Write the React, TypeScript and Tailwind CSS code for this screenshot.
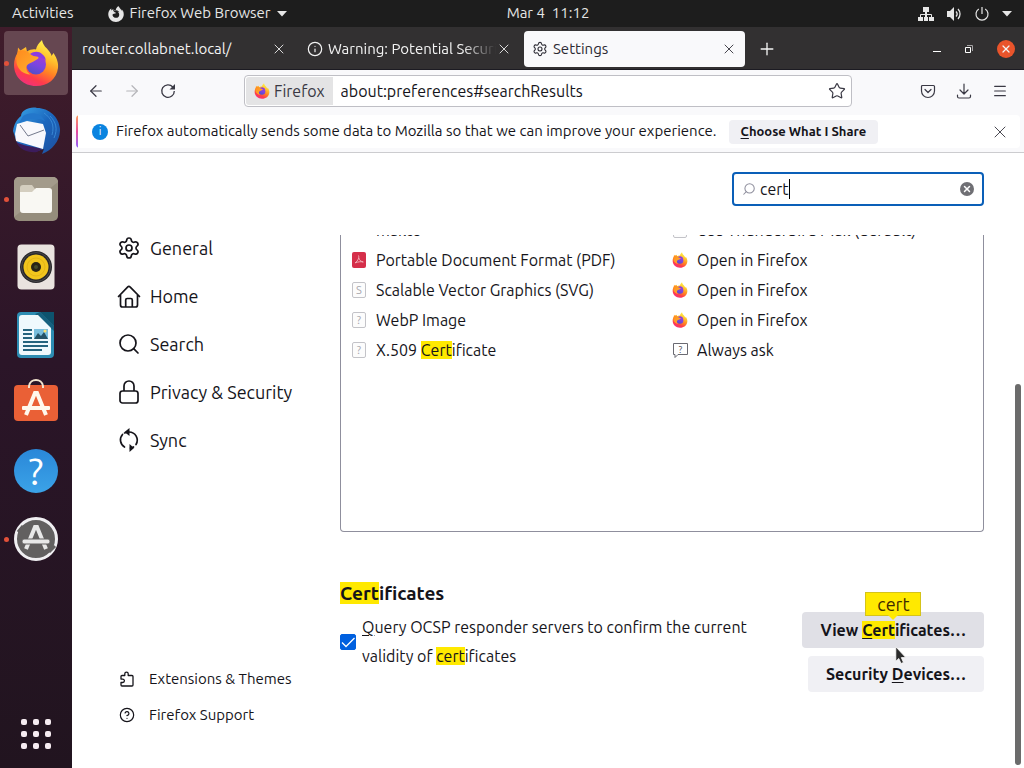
import { useId, useState } from "react";
import type { ReactNode } from "react";
import {
  ArrowLeft,
  ArrowRight,
  CircleQuestionMark,
  Info,
  Menu,
  Plus,
  Search,
  Settings,
  Star,
  X,
} from "lucide-react";
import { SiFirefoxbrowser } from "react-icons/si";

const Mark = ({ children }: { children: ReactNode }) => (
  <mark className="bg-[#ffe900] text-inherit">{children}</mark>
);

function FirefoxLogo({ className }: { className?: string }) {
  const id = useId();
  return (
    <svg viewBox="0 0 48 48" className={className} aria-hidden="true">
      <defs>
        <linearGradient id={`${id}body`} x1="0.75" y1="0.05" x2="0.3" y2="1">
          <stop offset="0" stopColor="#fff44f" />
          <stop offset="0.3" stopColor="#ffc02d" />
          <stop offset="0.55" stopColor="#ff8423" />
          <stop offset="0.8" stopColor="#ff3b4c" />
          <stop offset="1" stopColor="#f0307f" />
        </linearGradient>
        <linearGradient id={`${id}globe`} x1="0.7" y1="0" x2="0.3" y2="1">
          <stop offset="0" stopColor="#a43bd6" />
          <stop offset="0.5" stopColor="#7b45e0" />
          <stop offset="1" stopColor="#4d50c8" />
        </linearGradient>
        <linearGradient id={`${id}head`} x1="0" y1="0" x2="1" y2="1">
          <stop offset="0" stopColor="#ff8a1e" />
          <stop offset="1" stopColor="#ffb52e" />
        </linearGradient>
      </defs>
      <path
        fill={`url(#${id}body)`}
        d="M30 1c1 6 5 8 7 11 1.500 2 2.500 3.500 2.500 5l2-3c4 6 5 11 4.500 15C44.500 40 36 47 24 47 11.500 47 2 38 2 26c0-5 1.500-9 3.500-12L6 8.500l2.500 3L14 8l1 4.500c3-2 6-2.500 9-2C24.500 7 27 4 30 1Z"
      />
      <circle cx="24" cy="25.500" r="10" fill={`url(#${id}globe)`} />
      <path
        fill="#8a3be0"
        d="M18 15c4-3 9-3 12 0 3 2 4 5 3.500 7-2-3-5-4-8-4l-6 2Z"
      />
      <path
        fill={`url(#${id}head)`}
        d="M6 12c3-1 7-1 9.500.5 2 1.500 3 3.500 6 4.500 2 .6 4.500.3 5 1.500.4 1.500-3 2.500-5 4-2.500 1.500-6 2-7 5-.8 3 1 6 4 8-7 0-13-5-14-12-.4-4 .2-8 1.500-11.500Z"
      />
    </svg>
  );
}

const ThunderbirdLogo = () => (
  <svg viewBox="0 0 48 48" className="size-12" aria-hidden="true">
    <defs>
      <linearGradient id="bird" x1="0" y1="0" x2="1" y2="1">
        <stop offset="0" stopColor="#3aa7ea" />
        <stop offset="0.5" stopColor="#1b66bd" />
        <stop offset="1" stopColor="#1f4f9e" />
      </linearGradient>
    </defs>
    <path
      fill="url(#bird)"
      d="M13 3c3-2 8-3 12-2 12 0 22 9 23 21 .5 11-7 21-18 25l2-5-7 2c-9 1-18-3-21-11L1 24C2 17 5 12 9 9c0-3 2-5 4-6Z"
    />
    <path fill="#3c1c5c" d="M4 35c7 4 16 4 26 7l-5 3C16 46 8 43 4 35Z" />
    <path fill="#f8f8fc" d="M5 17 15 14l16 3 3 9-3 16L4 34l-1-7Z" />
    <path
      fill="none"
      stroke="#646b80"
      strokeWidth="0.900"
      d="m8 18 8 11 16-6"
    />
    <path fill="#2377cb" d="M11 9c8-5 18-3 22 5-6-3-13-3-20 0l-6 2Z" />
    <path
      fill="none"
      stroke="#3b8cd8"
      strokeWidth="0.900"
      d="M32 6c7 5 11 12 8 22M38 9c6 6 8 13 4 22"
    />
  </svg>
);

const FilesLogo = () => (
  <svg viewBox="0 0 44 44" className="size-11" aria-hidden="true">
    <rect width="44" height="44" rx="5" fill="#958d7c" />
    <path fill="#a39b8b" d="M5 0h34a5 5 0 0 1 5 5L0 40V5a5 5 0 0 1 5-5Z" />
    <path
      fill="#d4cebf"
      d="M9 8h9l3 4h14a3 3 0 0 1 3 3v4H6v-8a3 3 0 0 1 3-3Z"
    />
    <path
      fill="#f9f8f3"
      d="M6 15h12l4-4h13a3 3 0 0 1 3 3v19a3 3 0 0 1-3 3H9a3 3 0 0 1-3-3Z"
    />
  </svg>
);

const RhythmboxLogo = () => (
  <svg viewBox="0 0 38 46" className="h-[46px] w-[38px]" aria-hidden="true">
    <rect x="0.500" y="0.500" width="37" height="45" rx="4" fill="#e9e3df" />
    <circle cx="19" cy="23" r="16" fill="#29282b" />
    <circle cx="19" cy="23" r="14.500" fill="none" stroke="#4a494c" />
    <circle cx="19" cy="23" r="12.500" fill="#f1c51d" />
    <circle cx="19" cy="23" r="9" fill="none" stroke="#e3b517" />
    <circle cx="19" cy="23" r="5" fill="#292516" />
    <circle cx="19" cy="23" r="2" fill="#454c2a" />
  </svg>
);

const WriterLogo = () => (
  <svg viewBox="0 0 38 46" className="h-[46px] w-[38px]" aria-hidden="true">
    <path fill="#0d536e" d="M23 0h14v14Z" />
    <path
      fill="#2d8db3"
      d="M4 0h19l14 14v28a4 4 0 0 1-4 4H4a4 4 0 0 1-4-4V4a4 4 0 0 1 4-4Z"
    />
    <path fill="#15617f" d="m23 0 14 14v5L18 2Z" />
    <path
      fill="#eff9fd"
      d="M5 3h16l13 13v24a3 3 0 0 1-3 3H5a3 3 0 0 1-3-3V6a3 3 0 0 1 3-3Z"
    />
    <path
      stroke="#25647e"
      strokeWidth="2"
      d="M6 18h9M6 22h9M6 26h9M6 30h25M6 34h25M6 38h19"
    />
    <path fill="#79bedd" d="M17 17h14v10H17Z" />
    <path fill="#255266" d="m17 27 4-6 3 3 3-4 4 7Z" />
    <circle cx="28" cy="19" r="1.500" fill="#ffe26e" />
  </svg>
);

const SoftwareLogo = () => (
  <svg viewBox="0 2 44 44" className="size-11 overflow-visible" aria-hidden="true">
    <rect y="6" width="44" height="36" rx="4" fill="#ea6036" />
    <path
      fill="none"
      stroke="#f3e4ce"
      strokeWidth="2"
      d="M15 9V7c1-8 13-8 14 0v2"
    />
    <path
      fill="none"
      stroke="#fff8ed"
      strokeWidth="4"
      d="m12 36 9-22h2l9 22"
    />
    <rect x="8" y="27" width="28" height="4" rx="1" fill="#fff8ed" />
  </svg>
);

const UpdaterLogo = () => (
  <svg viewBox="0 0 44 44" className="size-11" aria-hidden="true">
    <circle cx="22" cy="22" r="20" fill="#626060" />
    <circle
      cx="22"
      cy="22"
      r="20.500"
      fill="none"
      stroke="#f0eff2"
      strokeWidth="3"
    />
    <path stroke="#626060" strokeWidth="3" d="m4 15 5-6M35 35l6-6" />
    <path
      fill="none"
      stroke="#e8e8e8"
      strokeWidth="4"
      d="m12 32 9-22h2l9 22"
    />
    <rect
      x="8"
      y="22"
      width="28"
      height="5"
      rx="2"
      fill="#e8e8e8"
      stroke="#626060"
    />
  </svg>
);

const dock = [
  { name: "Firefox", icon: <FirefoxLogo className="size-12" />, open: true, active: true },
  { name: "Thunderbird", icon: <ThunderbirdLogo /> },
  { name: "Files", icon: <FilesLogo />, open: true },
  { name: "Rhythmbox", icon: <RhythmboxLogo /> },
  { name: "LibreOffice Writer", icon: <WriterLogo /> },
  { name: "Ubuntu Software", icon: <SoftwareLogo /> },
  {
    name: "Help",
    icon: (
      <span className="flex size-11 items-center justify-center rounded-full bg-linear-to-b from-[#2a87d8] to-[#3ba3e8] text-[38px] leading-none text-white">
        ?
      </span>
    ),
  },
  { name: "Software Updater", icon: <UpdaterLogo />, open: true },
];

const Caret = () => (
  <svg viewBox="0 0 10 6" className="h-[6px] w-[10px]" aria-hidden="true">
    <path fill="currentColor" d="M0 0h10L5 5.500Z" />
  </svg>
);

function TopBar() {
  return (
    <header className="grid h-[27px] shrink-0 grid-cols-[1fr_auto_1fr] items-center bg-[#1d1d1d] pr-3 pl-[84px] text-[15px] text-[#e6e6e6]">
      <div className="-ml-[72px] flex items-center gap-[34px]">
        <button>Activities</button>
        <button className="flex items-center gap-[6px]">
          <SiFirefoxbrowser className="size-4" />
          Firefox Web Browser
          <Caret />
        </button>
      </div>
      <button>Mar 4&nbsp; 11:12</button>
      <div className="flex items-center justify-end gap-3">
        <svg viewBox="0 0 16 16" className="size-4" aria-label="Wired network">
          <path
            fill="currentColor"
            d="M5 1h6v5H5ZM0 11h5v4H0Zm6 0h4v4H6Zm5 0h5v4h-5ZM7 6h2v5H7Z"
          />
          <path fill="none" stroke="currentColor" d="M2.500 11V8.500h11V11" />
        </svg>
        <svg viewBox="0 0 16 16" className="size-4" aria-label="Volume">
          <path fill="currentColor" d="M1 5h3l4-4v14l-4-4H1Z" />
          <path
            fill="none"
            stroke="currentColor"
            strokeWidth="1.300"
            d="M10 5.500c1.300 1.400 1.300 3.600 0 5M12 3c2.700 2.800 2.700 7.200 0 10"
          />
        </svg>
        <svg viewBox="0 0 16 16" className="size-4" aria-label="Power">
          <path
            fill="none"
            stroke="currentColor"
            strokeWidth="1.200"
            d="M8 1v7M4.800 3a6 6 0 1 0 6.400 0"
          />
        </svg>
        <Caret />
      </div>
    </header>
  );
}

function Dock() {
  return (
    <nav
      aria-label="Dock"
      className="flex w-[72px] shrink-0 flex-col items-center gap-1 bg-linear-to-b from-[#401c2b] via-[#2b1528] via-45% to-[#21141f] pt-1 pb-[2px]"
    >
      {dock.map((app) => (
        <button
          key={app.name}
          aria-label={app.name}
          className={`relative flex size-16 shrink-0 items-center justify-center rounded-[4px] ${
            app.active ? "bg-[#664751]" : ""
          }`}
        >
          {app.open && (
            <span className="absolute top-[30px] left-0 size-[5px] rounded-full bg-[#e2513a]" />
          )}
          {app.icon}
        </button>
      ))}
      <button
        aria-label="Show Applications"
        className="mt-auto flex size-16 items-center justify-center"
      >
        <span className="grid grid-cols-3 gap-[6px]">
          {[...Array(9)].map((_, i) => (
            <span key={i} className="size-[6px] rounded-[2px] bg-[#f6ecf1]" />
          ))}
        </span>
      </button>
    </nav>
  );
}

function TabStrip() {
  return (
    <div className="flex h-[43px] shrink-0 items-center border-b border-[#1c1b22] bg-[#323031] pt-[2px] pl-[2px] text-[15px] text-[#f3f3f3]">
      <div className="flex gap-1">
        <div className="flex h-9 w-[221px] items-center px-2">
          <span className="flex-1 truncate">router.collabnet.local/</span>
          <button aria-label="Close tab">
            <X className="size-4" strokeWidth={1.3} />
          </button>
        </div>
        <div className="flex h-9 w-[221px] items-center px-2">
          <Info className="mr-[5px] size-4 shrink-0" strokeWidth={1.8} />
          <span className="flex-1 overflow-hidden mask-r-from-80% whitespace-nowrap">
            Warning: Potential Security Risk Ahead
          </span>
          <button aria-label="Close tab">
            <X className="size-4" strokeWidth={1.3} />
          </button>
        </div>
        <div className="flex h-9 w-[221px] items-center rounded-[4px] bg-[#f9f9fb] px-2 text-[#2b2a33]">
          <Settings className="mr-[5px] size-4" strokeWidth={1.6} />
          <span className="flex-1">Settings</span>
          <button aria-label="Close tab">
            <X className="size-4" strokeWidth={1.3} />
          </button>
        </div>
      </div>
      <button aria-label="New tab" className="ml-3">
        <Plus className="size-5" strokeWidth={1.6} />
      </button>
      <div className="ml-auto flex items-center gap-[23px] pr-[9px]">
        <button aria-label="Minimize" className="flex h-4 w-2 items-center">
          <span className="mt-1 h-px w-2 bg-white" />
        </button>
        <button aria-label="Restore">
          <svg viewBox="0 0 10 10" className="size-[10px]">
            <path fill="none" stroke="#fff" d="M1.500 3.500h5v5h-5Z" />
            <path fill="none" stroke="#a5a3a4" d="M3 1.500h5.500V7" />
          </svg>
        </button>
        <button
          aria-label="Close window"
          className="flex size-[18px] items-center justify-center rounded-full bg-[#e9542b]"
        >
          <X className="size-3" strokeWidth={2.5} />
        </button>
      </div>
    </div>
  );
}

const toolButton = "flex size-8 shrink-0 items-center justify-center";

function NavBar() {
  return (
    <div className="flex h-[42px] shrink-0 items-center gap-1 bg-[#f9f9fb] px-2 text-[#3a3944]">
      <button aria-label="Back" className={toolButton}>
        <ArrowLeft className="size-[18px]" strokeWidth={1.6} />
      </button>
      <button aria-label="Forward" className={`${toolButton} text-[#b5b5b9]`}>
        <ArrowRight className="size-[18px]" strokeWidth={1.6} />
      </button>
      <button aria-label="Reload" className={toolButton}>
        <svg viewBox="0 0 16 16" className="size-4">
          <path
            fill="none"
            stroke="currentColor"
            strokeWidth="1.300"
            d="M12.800 4A6.300 6.300 0 1 0 14.300 8"
          />
          <path fill="currentColor" d="M15 1v5.500H9.500Z" />
        </svg>
      </button>
      <div className="mx-14 flex h-8 min-w-0 flex-1 items-center rounded-[4px] border border-[#bfbfc5] bg-white p-px text-base">
        <span className="flex h-7 items-center gap-1 rounded-l-[3px] bg-[#e4e4e5] px-2 text-[#3a3944]">
          <FirefoxLogo className="size-4" />
          Firefox
        </span>
        <input
          aria-label="Address"
          defaultValue="about:preferences#searchResults"
          className="min-w-0 flex-1 px-2 text-[#15141a] outline-none"
        />
        <button aria-label="Bookmark this page" className="px-1">
          <Star className="size-[18px]" strokeWidth={1.6} />
        </button>
      </div>
      <button aria-label="Save to Pocket" className={toolButton}>
        <svg viewBox="0 0 16 16" className="size-4">
          <path
            fill="none"
            stroke="currentColor"
            strokeWidth="1.200"
            strokeLinecap="round"
            strokeLinejoin="round"
            d="M2.500 2.500h11a1 1 0 0 1 1 1V8a6.500 6.500 0 0 1-13 0V3.500a1 1 0 0 1 1-1ZM5 6.500l3 3 3-3"
          />
        </svg>
      </button>
      <button aria-label="Downloads" className={toolButton}>
        <svg viewBox="0 0 16 16" className="size-4">
          <path
            fill="none"
            stroke="currentColor"
            strokeWidth="1.200"
            strokeLinecap="round"
            strokeLinejoin="round"
            d="M8 1v9.500M4 7l4 4 4-4M1.500 12v1.500a1.500 1.500 0 0 0 1.500 1.500h10a1.500 1.500 0 0 0 1.500-1.500V12"
          />
        </svg>
      </button>
      <button aria-label="Open menu" className={toolButton}>
        <Menu className="size-4" strokeWidth={1.8} />
      </button>
    </div>
  );
}

function Notification() {
  return (
    <div className="flex h-[41px] shrink-0 border-b border-[#cccccf] bg-[#f9f9fb] px-1 pt-[3px] pb-1">
      <div className="flex flex-1 items-center overflow-hidden rounded-[4px] bg-white">
        <span className="w-[2px] self-stretch bg-linear-to-b from-[#ff9a52] via-[#e64b9c] to-[#9059ff]" />
        <span className="mr-2 ml-[14px] flex size-4 shrink-0 items-center justify-center rounded-full bg-[#0a84e0] text-[11px] leading-none text-white">
          i
        </span>
        <p className="text-[15px] text-[#15141a]">
          Firefox automatically sends some data to Mozilla so that we can
          improve your experience.
        </p>
        <button className="ml-3 h-6 rounded-[4px] bg-[#f0f0f4] px-3 text-[13px] font-bold text-[#15141a]">
          <u className="underline-offset-2">C</u>hoose What I Share
        </button>
        <button aria-label="Dismiss" className="mr-[10px] ml-auto text-[#4a4952]">
          <X className="size-5" strokeWidth={1.2} />
        </button>
      </div>
    </div>
  );
}

const HomeIcon = () => (
  <svg viewBox="0 0 24 24" className="size-6" aria-hidden="true">
    <path
      fill="none"
      stroke="currentColor"
      strokeWidth="1.700"
      strokeLinecap="round"
      strokeLinejoin="round"
      d="m1.500 12.500 9.300-9.700a1.500 1.500 0 0 1 2.200 0l9.500 9.700M3.500 11v10a2 2 0 0 0 2 2h13a2 2 0 0 0 2-2V11M8.700 23v-7a1.500 1.500 0 0 1 1.500-1.500h3.600a1.500 1.500 0 0 1 1.500 1.500v7"
    />
  </svg>
);

const PadlockIcon = () => (
  <svg viewBox="0 0 24 24" className="size-6" aria-hidden="true">
    <g fill="none" stroke="currentColor" strokeWidth="1.700">
      <rect x="3" y="11" width="18" height="12" rx="2.500" />
      <path d="M7 11V6a5 5 0 0 1 10 0v5" />
    </g>
  </svg>
);

const SyncIcon = () => (
  <svg viewBox="0 0 24 24" className="size-6" aria-hidden="true">
    <path
      fill="none"
      stroke="currentColor"
      strokeWidth="1.700"
      strokeLinecap="round"
      d="M7.500 19A8.200 8.200 0 0 1 5.500 6.500M12 4a8.200 8.200 0 0 1 7 12.500M13.500 20.200A8 8 0 0 0 16.500 19M7.500 5 11 4"
    />
    <path fill="currentColor" d="M7.500 4 12.500 0v8ZM17 20l-4.500 4v-8Z" />
  </svg>
);

const PuzzleIcon = () => (
  <svg viewBox="0 0 16 16" className="size-4" aria-hidden="true">
    <path
      fill="none"
      stroke="currentColor"
      strokeWidth="1.300"
      strokeLinejoin="round"
      d="M2 5.500a1 1 0 0 1 1-1h2.800V2.800a1.700 1.700 0 0 1 3.400 0v1.700H13a1 1 0 0 1 1 1V14a1 1 0 0 1-1 1H3a1 1 0 0 1-1-1v-2.500h1.700a1.700 1.700 0 0 0 0-3.400H2Z"
    />
  </svg>
);

const categories = [
  { name: "General", icon: <Settings className="size-6" strokeWidth={1.7} /> },
  { name: "Home", icon: <HomeIcon /> },
  { name: "Search", icon: <Search className="size-6" strokeWidth={1.7} /> },
  { name: "Privacy & Security", icon: <PadlockIcon /> },
  { name: "Sync", icon: <SyncIcon /> },
];

function Sidebar() {
  return (
    <aside className="flex w-[268px] shrink-0 flex-col pt-[71px] pb-[35px] pl-[45px]">
      <nav aria-label="Categories" className="text-lg">
        {categories.map((c) => (
          <a
            key={c.name}
            href={`#${c.name}`}
            className="flex h-12 items-center gap-[9px]"
          >
            {c.icon}
            {c.name}
          </a>
        ))}
      </nav>
      <nav aria-label="More" className="mt-auto pl-[2px] text-[15px]">
        <a href="#addons" className="flex h-9 items-center gap-[14px]">
          <PuzzleIcon />
          Extensions &amp; Themes
        </a>
        <a href="#support" className="flex h-9 items-center gap-[14px]">
          <CircleQuestionMark className="size-4" strokeWidth={1.8} />
          Firefox Support
        </a>
      </nav>
    </aside>
  );
}

const FileIcon = ({ glyph }: { glyph: string }) => (
  <svg viewBox="0 0 16 16" className="size-4" aria-hidden="true">
    <rect
      x="1.500"
      y="0.500"
      width="13"
      height="15"
      rx="1.500"
      fill="#fcfcfc"
      stroke="#c3c3c8"
    />
    <text x="8" y="12" textAnchor="middle" fontSize="11" fill="#a5a5ac">
      {glyph}
    </text>
  </svg>
);

const PdfIcon = () => (
  <svg viewBox="0 0 16 16" className="size-4" aria-hidden="true">
    <rect x="1" width="14" height="16" rx="2" fill="#d52f4a" />
    <path
      fill="none"
      stroke="#f3b5bd"
      strokeWidth="0.900"
      d="M7.500 3.500c.8 2-.2 5-3.500 7.500M7.800 6c.5 2 2 3.500 4.500 4-3-.6-5-.2-8 .8"
    />
  </svg>
);

const AskIcon = () => (
  <svg viewBox="0 0 16 16" className="size-4" aria-hidden="true">
    <path fill="none" stroke="#6a6a72" d="M1.500 1.500h14v11H6l-3 3v-3H1.500Z" />
    <text x="8.500" y="10.500" textAnchor="middle" fontSize="9" fill="#4a4a52">
      ?
    </text>
  </svg>
);

const firefoxAction = { icon: <FirefoxLogo className="size-4" />, text: "Open in Firefox" };

const fileTypes: {
  icon: ReactNode;
  type: ReactNode;
  action: { icon: ReactNode; text: string };
}[] = [
  {
    icon: <span className="size-4" />,
    type: "mailto",
    action: { icon: <FileIcon glyph="" />, text: "Use Thunderbird Mail (default)" },
  },
  { icon: <PdfIcon />, type: "Portable Document Format (PDF)", action: firefoxAction },
  {
    icon: <FileIcon glyph="S" />,
    type: "Scalable Vector Graphics (SVG)",
    action: firefoxAction,
  },
  { icon: <FileIcon glyph="?" />, type: "WebP Image", action: firefoxAction },
  {
    icon: <FileIcon glyph="?" />,
    type: (
      <>
        X.509 <Mark>Cert</Mark>ificate
      </>
    ),
    action: { icon: <AskIcon />, text: "Always ask" },
  },
];

function Preferences() {
  const [query, setQuery] = useState("cert");
  const [ocsp, setOcsp] = useState(true);

  return (
    <main className="relative flex min-h-0 flex-1 overflow-hidden bg-white text-base text-[#15141a]">
      <Sidebar />
      <div className="flex min-w-0 flex-1 flex-col pr-10">
        <div className="flex h-[82px] shrink-0 justify-end pt-[19px]">
          <label className="flex h-[34px] w-[252px] items-center rounded-[4px] border-2 border-[#0a5fb8] px-2">
            <Search
              className="mr-1 size-[14px] -scale-x-100 text-[#8f8f9d]"
              strokeWidth={1.8}
            />
            <input
              aria-label="Find in Settings"
              value={query}
              onChange={(e) => setQuery(e.target.value)}
              className="field-sizing-content outline-none"
            />
            <span className="h-5 w-px bg-black" />
            <button
              aria-label="Clear"
              onClick={() => setQuery("")}
              className="ml-auto flex size-[14px] items-center justify-center rounded-full bg-[#6f6f74] text-white"
            >
              <X className="size-[10px]" strokeWidth={3.5} />
            </button>
          </label>
        </div>

        <div className="min-h-0 flex-1 overflow-hidden">
          {/* Applications, scrolled so that the first row is cut off */}
          <div className="-mt-5 h-[317px] rounded-[4px] border border-t-0 border-[#8f8f9d]">
            <table className="w-full table-fixed">
              <tbody>
                {fileTypes.map((row, i) => (
                  <tr key={i} className="h-[30px]">
                    <td className="pl-[10px]">
                      <span className="flex items-center gap-[9px] leading-6">
                        {row.icon}
                        <span>{row.type}</span>
                      </span>
                    </td>
                    <td className="pl-[10px]">
                      <span className="flex items-center gap-[9px] leading-6">
                        {row.action.icon}
                        {row.action.text}
                      </span>
                    </td>
                  </tr>
                ))}
              </tbody>
            </table>
          </div>

          {/* Certificates */}
          <h2 className="mt-12 text-[19px] leading-[26px] font-bold">
            <Mark>Cert</Mark>ificates
          </h2>
          <div className="flex items-start justify-between">
            <label className="mt-[7px] flex items-center gap-[6px] leading-[29px]">
              <span className="grid size-4 shrink-0">
                <input
                  type="checkbox"
                  checked={ocsp}
                  onChange={(e) => setOcsp(e.target.checked)}
                  className="peer col-start-1 row-start-1 appearance-none rounded-[2px] border border-[#8f8f9d] checked:border-[#0060df] checked:bg-[#0060df]"
                />
                <svg
                  viewBox="0 0 16 16"
                  className="pointer-events-none invisible col-start-1 row-start-1 peer-checked:visible"
                  aria-hidden="true"
                >
                  <path
                    fill="none"
                    stroke="#fff"
                    strokeWidth="1.300"
                    d="m2 8.500 4 4 8.500-8.500"
                  />
                </svg>
              </span>
              <span className="w-[400px]">
                <u className="underline-offset-2">Q</u>uery OCSP responder
                servers to confirm the current validity of <Mark>cert</Mark>
                ificates
              </span>
            </label>
            <div className="mt-[6px] flex flex-col items-end gap-2 font-bold">
              <button className="relative h-9 rounded-[4px] bg-[#e0e0e6] px-[18px]">
                View{" "}
                <Mark>
                  <u className="underline-offset-2">C</u>ert
                </Mark>
                ificates…
                <span className="absolute -top-5 left-[63px] flex h-6 w-14 items-center justify-center border border-[#d5c31a] bg-[#ffe900] text-lg font-normal text-[#3e2a00]">
                  cert
                  <svg
                    viewBox="0 0 10 5"
                    className="absolute top-full h-[5px] w-[10px]"
                    aria-hidden="true"
                  >
                    <path fill="#ffe900" d="M0 0h10L5 5Z" />
                  </svg>
                </span>
                <svg
                  viewBox="0 0 12 19"
                  className="absolute top-[34px] left-[93px] z-10 h-[19px] w-3"
                  aria-hidden="true"
                >
                  <path
                    fill="#2c2c2c"
                    stroke="#fff"
                    strokeWidth="0.800"
                    d="M.8.8v14.500l3-2.800 2.200 5 2.500-1.100-2.200-4.800h4.500Z"
                  />
                </svg>
              </button>
              <button className="h-9 rounded-[4px] bg-[#f0f0f4] px-[18px]">
                Security <u className="underline-offset-2">D</u>evices…
              </button>
            </div>
          </div>
        </div>
      </div>
      <div className="absolute top-[231px] right-[3px] bottom-[3px] w-[6px] rounded-full bg-[#6b6b6b]" />
    </main>
  );
}

export default function App() {
  return (
    <div className="flex h-screen flex-col overflow-hidden font-['Ubuntu','Noto_Sans',sans-serif]">
      <TopBar />
      <div className="flex min-h-0 flex-1">
        <Dock />
        <div className="flex min-w-0 flex-1 flex-col">
          <TabStrip />
          <NavBar />
          <Notification />
          <Preferences />
        </div>
      </div>
    </div>
  );
}
